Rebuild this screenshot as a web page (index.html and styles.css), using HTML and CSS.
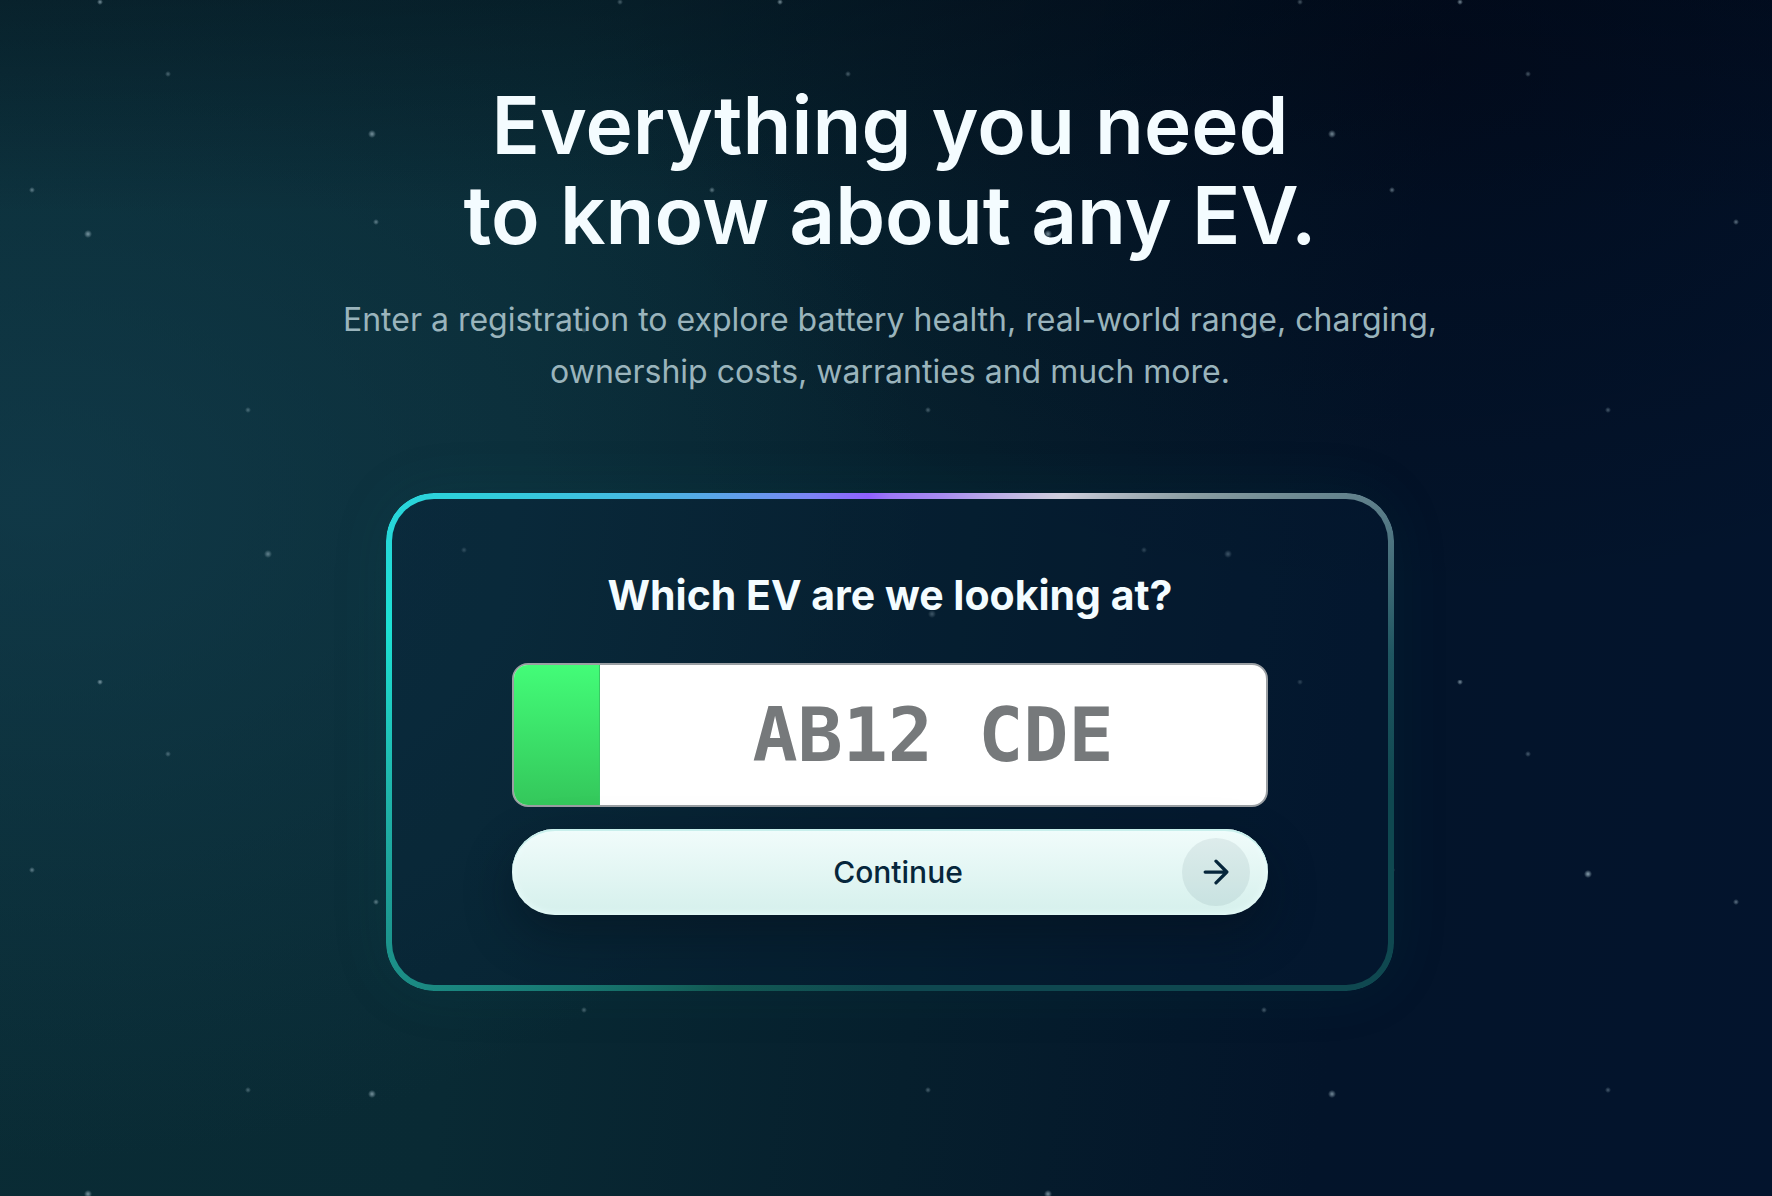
FILE: index.html
```html
<!DOCTYPE html>
<html lang="en">
<head>
  <meta charset="UTF-8">
  <meta name="viewport" content="width=device-width, initial-scale=1">
  <title>EV lookup</title>
  <link rel="stylesheet" href="styles.css">
</head>
<body>
  <main class="hero">
    <h1>Everything you need<br>to know about any EV.</h1>
    <p class="intro">Enter a registration to explore battery health, real-world range, charging, ownership costs, warranties and much more.</p>

    <form class="card">
      <label class="card-title" for="registration">Which EV are we looking at?</label>
      <div class="plate">
        <span class="plate-band"></span>
        <input id="registration" class="plate-input" type="text" placeholder="AB12 CDE" autocomplete="off">
      </div>
      <button class="continue" type="submit">
        <span class="continue-label">Continue</span>
        <span class="continue-icon">
          <svg viewBox="0 0 24 24" width="26" height="26" fill="none" stroke="currentColor" stroke-width="3" stroke-linecap="round" stroke-linejoin="round" aria-hidden="true">
            <path d="M2 12H22M12 2L22 12L12 22"/>
          </svg>
        </span>
      </button>
    </form>
  </main>
</body>
</html>
```

FILE: styles.css
```css
* {
  box-sizing: border-box;
}

body {
  margin: 0;
  min-height: 100vh;
  font-family: Inter, "Open Sans", sans-serif;
  color: #f4fcff;
  background:
    linear-gradient(180deg, rgba(0, 4, 14, 0.3) 0%, transparent 18%),
    radial-gradient(ellipse 50% 55% at 2% 42%, rgba(20, 64, 82, 0.6) 0%, transparent 100%),
    radial-gradient(ellipse 45% 45% at 80% 5%, rgba(0, 5, 20, 0.5) 0%, transparent 100%),
    linear-gradient(97deg, #0a2c35 0%, #092a34 30%, #061f2d 54%, #03142a 76%, #03142d 100%);
}

/* stars: two tiles that repeat at different sizes */
.hero {
  min-height: 100vh;
  padding: 80px 20px 80px 28px;
  text-align: center;
  background-image:
    radial-gradient(circle 4px at 372px 134px, rgba(190, 215, 225, 0.5) 20%, transparent 100%),
    radial-gradient(circle 4px at 268px 554px, rgba(190, 215, 225, 0.4) 20%, transparent 100%),
    radial-gradient(circle 4px at 88px 234px, rgba(190, 215, 225, 0.5) 20%, transparent 100%),
    radial-gradient(circle 4px at 932px 614px, rgba(190, 215, 225, 0.4) 20%, transparent 100%),
    radial-gradient(circle 4px at 628px 874px, rgba(190, 215, 225, 0.6) 20%, transparent 100%),
    radial-gradient(circle 3px at 100px 2px, rgba(190, 215, 225, 0.5) 20%, transparent 100%),
    radial-gradient(circle 3px at 620px 2px, rgba(190, 215, 225, 0.3) 20%, transparent 100%),
    radial-gradient(circle 3px at 168px 74px, rgba(190, 215, 225, 0.3) 20%, transparent 100%),
    radial-gradient(circle 3px at 248px 410px, rgba(190, 215, 225, 0.3) 20%, transparent 100%),
    radial-gradient(circle 3px at 32px 190px, rgba(190, 215, 225, 0.4) 20%, transparent 100%),
    radial-gradient(circle 3px at 376px 222px, rgba(190, 215, 225, 0.4) 20%, transparent 100%),
    radial-gradient(circle 3px at 464px 550px, rgba(190, 215, 225, 0.3) 20%, transparent 100%),
    radial-gradient(circle 3px at 584px 330px, rgba(190, 215, 225, 0.3) 20%, transparent 100%);
  background-size:
    960px 960px, 960px 960px, 960px 960px, 960px 960px, 960px 960px,
    680px 680px, 680px 680px, 680px 680px, 680px 680px,
    680px 680px, 680px 680px, 680px 680px, 680px 680px;
}

h1 {
  margin: 0;
  font-size: 80px;
  line-height: 90px;
  font-weight: 600;
}

.intro {
  max-width: 1140px;
  margin: 34px auto 0;
  font-size: 32px;
  line-height: 52px;
  color: #9ab4bc;
}

.card {
  position: relative;
  display: flex;
  flex-direction: column;
  max-width: 1008px;
  margin: 95px auto 0;
  padding: 74px 126px 76px;
  border-radius: 48px;
  background: rgba(5, 28, 54, 0.35);
  box-shadow: 0 0 60px rgba(20, 110, 110, 0.1);
}

/* gradient ring round the card */
.card::before {
  content: "";
  position: absolute;
  inset: 0;
  border-radius: 48px;
  padding: 6px;
  background: conic-gradient(
    #9c78f6 0deg,
    #a88cf0 12deg,
    #cfcfdc 35deg,
    #8a9da2 51deg,
    #557985 66deg,
    #1f5661 80deg,
    #0f4850 96deg,
    #0f4850 180deg,
    #125953 215deg,
    #1b8a83 243deg,
    #1fb8ae 266deg,
    #1de0d4 283deg,
    #2ad4da 297deg,
    #4fb0e4 319deg,
    #7c85f5 342deg,
    #9060ff 355deg,
    #9c78f6 360deg
  );
  -webkit-mask: linear-gradient(#000 0 0) content-box, linear-gradient(#000 0 0);
  -webkit-mask-composite: xor;
  mask: linear-gradient(#000 0 0) content-box exclude, linear-gradient(#000 0 0);
  pointer-events: none;
}

.card-title {
  font-size: 41px;
  line-height: 56px;
  font-weight: 700;
}

.plate {
  display: flex;
  height: 144px;
  margin-top: 40px;
  border: 2px solid #9a9fa3;
  border-radius: 16px;
  background: #fff;
  overflow: hidden;
}

.plate-band {
  flex: 0 0 86px;
  border-right: 1px solid #38c964;
  background: linear-gradient(180deg, #43fc78, #34c75b);
}

.plate-input {
  flex: 1;
  min-width: 0;
  border: none;
  outline: none;
  background: transparent;
  font-family: "DejaVu Sans Mono", monospace;
  font-size: 75px;
  font-weight: 700;
  text-align: center;
  color: #111;
}

.plate-input::placeholder {
  color: #76797b;
  opacity: 1;
}

.continue {
  display: grid;
  grid-template-columns: 68px 1fr 68px;
  align-items: center;
  height: 86px;
  margin-top: 22px;
  padding: 0 18px 0 34px;
  border: none;
  border-radius: 43px;
  background: linear-gradient(180deg, #f1fcfb, #d5f0ec);
  box-shadow: inset 0 2px 0 #c8efec, inset 0 0 8px #ecfffd, 0 20px 48px rgba(5, 14, 24, 0.4);
  color: #06263b;
  font-family: inherit;
  font-size: 30px;
  font-weight: 500;
  cursor: pointer;
}

.continue-label {
  grid-column: 2;
}

.continue-icon {
  display: grid;
  place-items: center;
  height: 68px;
  border-radius: 50%;
  background: rgba(6, 38, 59, 0.07);
}
```
